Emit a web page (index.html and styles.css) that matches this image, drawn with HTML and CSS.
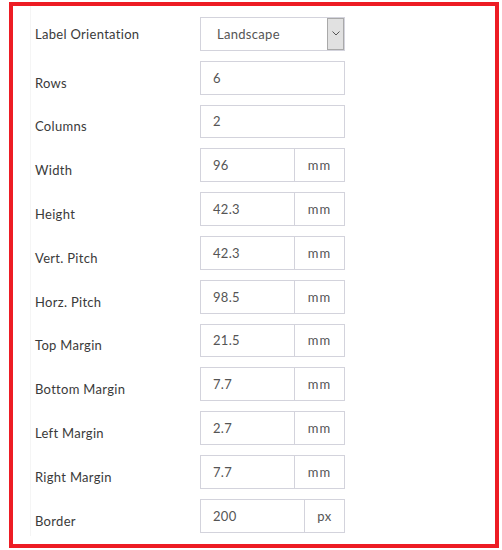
FILE: index.html
```html
<!DOCTYPE html>
<html>
<head>
<meta charset="utf-8">
<link rel="stylesheet" href="styles.css">
</head>
<body>
<div class="panel">
  <form class="form">
    <label class="label label-first">Label Orientation</label>
    <div class="select-box">
      <span class="select-value">Landscape</span>
      <span class="select-arrow">
        <svg width="8" height="5" viewBox="0 0 8 5"><path d="M0.5 0.5 L4 4 L7.5 0.5" fill="none" stroke="#555" stroke-width="1"/></svg>
      </span>
    </div>

    <label class="label">Rows</label>
    <div class="field"><span class="value">6</span></div>

    <label class="label">Columns</label>
    <div class="field"><span class="value">2</span></div>

    <label class="label">Width</label>
    <div class="field"><span class="value">96</span><span class="addon">mm</span></div>

    <label class="label">Height</label>
    <div class="field"><span class="value">42.3</span><span class="addon">mm</span></div>

    <label class="label">Vert. Pitch</label>
    <div class="field"><span class="value">42.3</span><span class="addon">mm</span></div>

    <label class="label">Horz. Pitch</label>
    <div class="field"><span class="value">98.5</span><span class="addon">mm</span></div>

    <label class="label">Top Margin</label>
    <div class="field"><span class="value">21.5</span><span class="addon">mm</span></div>

    <label class="label">Bottom Margin</label>
    <div class="field"><span class="value">7.7</span><span class="addon">mm</span></div>

    <label class="label">Left Margin</label>
    <div class="field"><span class="value">2.7</span><span class="addon">mm</span></div>

    <label class="label">Right Margin</label>
    <div class="field"><span class="value">7.7</span><span class="addon">mm</span></div>

    <label class="label">Border</label>
    <div class="field"><span class="value">200</span><span class="addon addon-px">px</span></div>
  </form>
</div>
</body>
</html>
```

FILE: styles.css
```css
html, body {
  margin: 0;
  padding: 0;
  background: #ffffff;
}

body {
  font-family: Lato, "Liberation Sans", sans-serif;
  font-size: 13px;
  letter-spacing: 0.3px;
  color: #3a3a3a;
}

.panel {
  box-sizing: border-box;
  margin: 2px 0 0 9px;
  width: 490px;
  height: 546px;
  border: 4px solid #ed1c24;
  padding: 11px 0 0 17px;
}

.form {
  display: grid;
  grid-template-columns: 165px 145px;
  grid-auto-rows: 33.8px;
  row-gap: 10px;
  border-left: 1px solid #f5f5f5;
  padding-left: 4px;
  margin-top: -11px;
  padding-top: 11px;
  height: 530px;
  box-sizing: border-box;
  align-content: start;
}

.label {
  align-self: center;
  line-height: 20px;
  padding-top: 10px;
  color: #3a3a3a;
  white-space: nowrap;
}

.label-first {
  padding-top: 1px;
}

.select-box {
  display: flex;
  box-sizing: border-box;
  border: 1px solid #d3d3dc;
  background: #fff;
}

.select-value {
  flex: 1;
  display: flex;
  align-items: center;
  padding-left: 16px;
  color: #555555;
}

.select-arrow {
  box-sizing: border-box;
  width: 17px;
  border: 1px solid #a9a9a9;
  background: #e1e1e1;
  display: flex;
  align-items: center;
  justify-content: center;
  padding-bottom: 1px;
}

.field {
  display: flex;
  box-sizing: border-box;
  border: 1px solid #d3d3dc;
  background: #fff;
}

.value {
  flex: 1;
  display: flex;
  align-items: center;
  padding-left: 12px;
  color: #555555;
}

.addon {
  box-sizing: border-box;
  width: 50px;
  border-left: 1px solid #d3d3dc;
  display: flex;
  align-items: center;
  justify-content: center;
  color: #555555;
  letter-spacing: 1px;
}

.addon-px {
  width: 40px;
  letter-spacing: 0.5px;
}
```
